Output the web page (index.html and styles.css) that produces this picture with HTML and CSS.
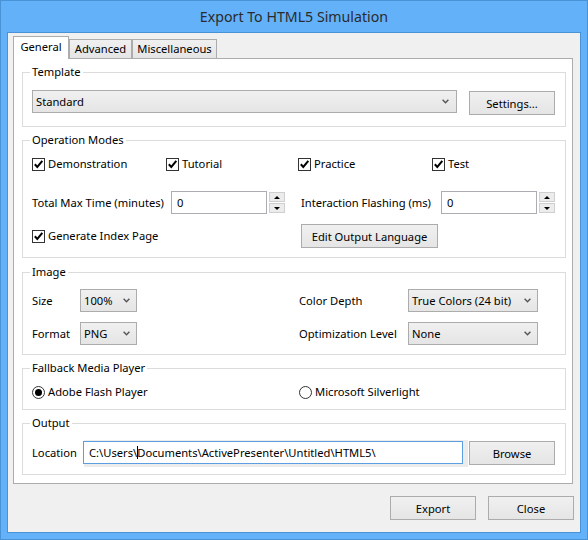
FILE: index.html
```html
<!DOCTYPE html>
<html lang="en">
<head>
  <meta charset="UTF-8">
  <meta name="viewport" content="width=device-width, initial-scale=1.0">
  <title>Export To HTML5 Simulation</title>
  <link rel="stylesheet" href="styles.css">
</head>
<body>
  <div class="window">
    <header class="titlebar">Export To HTML5 Simulation</header>
    <div class="client">
      <ul class="tabs">
        <li class="tab active general">General</li>
        <li class="tab advanced">Advanced</li>
        <li class="tab misc">Miscellaneous</li>
      </ul>

      <div class="panel">
        <!-- Template -->
        <fieldset class="group template">
          <legend>Template</legend>
          <div class="row">
            <div class="combo grow">
              <span>Standard</span>
              <svg class="chev" width="7" height="5" viewBox="0 0 7 5"><path d="M0.6 0.8 L3.5 3.8 L6.4 0.8" fill="none" stroke="#555" stroke-width="1.4"/></svg>
            </div>
            <button class="btn settings">Settings...</button>
          </div>
        </fieldset>

        <!-- Operation Modes -->
        <fieldset class="group modes">
          <legend>Operation Modes</legend>
          <div class="checks">
            <label class="check"><span class="box"><svg width="11" height="11" viewBox="0 0 11 11"><path d="M1.8 5.2 L4.3 7.9 L9.3 1.9" fill="none" stroke="#000" stroke-width="2"/></svg></span>Demonstration</label>
            <label class="check"><span class="box"><svg width="11" height="11" viewBox="0 0 11 11"><path d="M1.8 5.2 L4.3 7.9 L9.3 1.9" fill="none" stroke="#000" stroke-width="2"/></svg></span>Tutorial</label>
            <label class="check"><span class="box"><svg width="11" height="11" viewBox="0 0 11 11"><path d="M1.8 5.2 L4.3 7.9 L9.3 1.9" fill="none" stroke="#000" stroke-width="2"/></svg></span>Practice</label>
            <label class="check"><span class="box"><svg width="11" height="11" viewBox="0 0 11 11"><path d="M1.8 5.2 L4.3 7.9 L9.3 1.9" fill="none" stroke="#000" stroke-width="2"/></svg></span>Test</label>
          </div>
          <div class="fields">
            <div class="field">
              <span>Total Max Time (minutes)</span>
              <div class="spinner">
                <div class="text">0</div>
                <div class="spin"><span class="up"></span><span class="down"></span></div>
              </div>
            </div>
            <div class="field">
              <span>Interaction Flashing (ms)</span>
              <div class="spinner">
                <div class="text">0</div>
                <div class="spin"><span class="up"></span><span class="down"></span></div>
              </div>
            </div>
            <label class="check"><span class="box"><svg width="11" height="11" viewBox="0 0 11 11"><path d="M1.8 5.2 L4.3 7.9 L9.3 1.9" fill="none" stroke="#000" stroke-width="2"/></svg></span>Generate Index Page</label>
            <div><button class="btn lang">Edit Output Language</button></div>
          </div>
        </fieldset>

        <!-- Image -->
        <fieldset class="group image">
          <legend>Image</legend>
          <div class="image-grid">
            <span>Size</span>
            <div><div class="combo size"><span>100%</span><svg class="chev" width="7" height="5" viewBox="0 0 7 5"><path d="M0.6 0.8 L3.5 3.8 L6.4 0.8" fill="none" stroke="#555" stroke-width="1.4"/></svg></div></div>
            <span>Color Depth</span>
            <div><div class="combo depth"><span>True Colors (24 bit)</span><svg class="chev" width="7" height="5" viewBox="0 0 7 5"><path d="M0.6 0.8 L3.5 3.8 L6.4 0.8" fill="none" stroke="#555" stroke-width="1.4"/></svg></div></div>
            <span>Format</span>
            <div><div class="combo size"><span>PNG</span><svg class="chev" width="7" height="5" viewBox="0 0 7 5"><path d="M0.6 0.8 L3.5 3.8 L6.4 0.8" fill="none" stroke="#555" stroke-width="1.4"/></svg></div></div>
            <span>Optimization Level</span>
            <div><div class="combo depth"><span>None</span><svg class="chev" width="7" height="5" viewBox="0 0 7 5"><path d="M0.6 0.8 L3.5 3.8 L6.4 0.8" fill="none" stroke="#555" stroke-width="1.4"/></svg></div></div>
          </div>
        </fieldset>

        <!-- Fallback Media Player -->
        <fieldset class="group fallback">
          <legend>Fallback Media Player</legend>
          <div class="radios">
            <label class="radio"><span class="dot on"></span>Adobe Flash Player</label>
            <label class="radio"><span class="dot"></span>Microsoft Silverlight</label>
          </div>
        </fieldset>

        <!-- Output -->
        <fieldset class="group output">
          <legend>Output</legend>
          <div class="row">
            <span class="loc-label">Location</span>
            <div class="text location">C:\Users\<span class="caret"></span>Documents\ActivePresenter\Untitled\HTML5\</div>
            <button class="btn browse">Browse</button>
          </div>
        </fieldset>
      </div>

      <div class="actions">
        <button class="btn">Export</button>
        <button class="btn">Close</button>
      </div>
    </div>
  </div>
</body>
</html>
```

FILE: styles.css
```css
* {
  margin: 0;
  padding: 0;
  box-sizing: border-box;
}
body {
  font-family: "Noto Sans", "Segoe UI", sans-serif;
  font-size: 11.2px;
  color: #000;
  background: #62b1f9;
  white-space: nowrap;
}
.window {
  width: 588px;
  height: 540px;
  background: #62b1f9;
  border: 1px solid #4a92d6;
  padding: 0 6px 6px;
  display: flex;
  flex-direction: column;
}
.titlebar {
  height: 31px;
  line-height: 31px;
  text-align: center;
  font-size: 14.2px;
  color: #2b2b2b;
}
.client {
  flex: 1;
  background: #f0f0f0;
  border: 1px solid #4a92d6;
  padding: 3px 7px 0 5px;
}

/* tabs */
.tabs {
  list-style: none;
  display: flex;
  align-items: flex-end;
  height: 23px;
  margin-bottom: -1px;
}
.tab {
  height: 19px;
  margin-bottom: 1px;
  line-height: 18px;
  text-align: center;
  background: linear-gradient(#f0f0f0, #e5e5e5);
  border: 1px solid #acacac;
  border-bottom: 0;
}
.tab.active {
  height: 23px;
  margin-bottom: 0;
  line-height: 20px;
  background: #fff;
  z-index: 1;
}
.general { width: 56px; }
.advanced { width: 63px; }
.misc { width: 85px; }

.panel {
  background: #fff;
  border: 1px solid #acacac;
  padding: 5px 6px 8px 8px;
  display: flex;
  flex-direction: column;
  gap: 5px;
}

/* group boxes */
.group {
  border: 1px solid #dcdcdc;
  padding: 10px 10px 10px 9px;
}
.group legend {
  padding: 0 2px;
  margin-left: -2px;
  line-height: 16px;
}
.template { padding-bottom: 11px; }
.modes { padding-top: 8px; padding-bottom: 9px; }
.image { padding-top: 9px; padding-bottom: 9px; margin-top: 1px; }
.fallback { padding-top: 8px; padding-bottom: 9px; }
.output { padding-bottom: 9px; }

.row {
  display: flex;
  align-items: flex-start;
}

/* dropdowns */
.combo {
  height: 23px;
  display: flex;
  align-items: center;
  justify-content: space-between;
  padding: 0 7px 0 3px;
  border: 1px solid #acacac;
  background: linear-gradient(#f0f0f0, #e5e5e5);
}
.combo .chev { flex: none; }
.grow { flex: 1; }
.size { width: 57px; padding-right: 6px; }
.depth { width: 130px; padding-right: 6px; }

/* buttons */
.btn {
  height: 24px;
  font: inherit;
  color: #000;
  border: 1px solid #acacac;
  background: linear-gradient(#f0f0f0, #e5e5e5);
}
.settings { width: 86px; margin-left: 12px; margin-top: 1px; }
.lang { width: 137px; }
.browse { width: 86px; margin-left: 6px; }

/* checkboxes */
.checks {
  display: grid;
  grid-template-columns: 134px 132px 134px 1fr;
  height: 16px;
}
.check {
  display: flex;
  align-items: center;
  line-height: 16px;
}
.box {
  width: 13px;
  height: 13px;
  margin-right: 3px;
  border: 1px solid #333;
  background: #fff;
  display: flex;
}

.fields {
  display: grid;
  grid-template-columns: 253px 1fr;
  column-gap: 16px;
  row-gap: 10px;
  margin-top: 19px;
}
.field {
  display: flex;
  align-items: center;
  justify-content: space-between;
}
.spinner {
  display: flex;
}
.text {
  height: 23px;
  line-height: 21px;
  padding-left: 5px;
  border: 1px solid #abadb3;
  background: #fff;
  overflow: hidden;
}
.spinner .text { width: 96px; }
.spin {
  width: 16px;
  margin-left: 2px;
  padding-top: 1px;
  display: flex;
  flex-direction: column;
  gap: 1px;
}
.spin span {
  height: 10px;
  border: 1px solid #cfcfcf;
  background: #ececec;
  display: flex;
  align-items: center;
  justify-content: center;
}
.spin .up::before {
  content: "";
  border-left: 3px solid transparent;
  border-right: 3px solid transparent;
  border-bottom: 3px solid #000;
}
.spin .down::before {
  content: "";
  border-left: 3px solid transparent;
  border-right: 3px solid transparent;
  border-top: 3px solid #000;
}

/* image */
.image-grid {
  display: grid;
  grid-template-columns: 48px 219px 109px 1fr;
  grid-auto-rows: 23px;
  row-gap: 10px;
  align-items: center;
}

/* radios */
.radios {
  display: grid;
  grid-template-columns: 267px 1fr;
}
.radio {
  display: flex;
  align-items: center;
  line-height: 16px;
}
.dot {
  width: 13px;
  height: 13px;
  margin-right: 3px;
  border: 1px solid #333;
  border-radius: 50%;
  background: #fff;
  display: flex;
  align-items: center;
  justify-content: center;
}
.dot.on::before {
  content: "";
  width: 7px;
  height: 7px;
  border-radius: 50%;
  background: #000;
}

/* output */
.loc-label {
  width: 51px;
  line-height: 23px;
}
.location {
  flex: 1;
  border-color: #5b9fe2;
  box-shadow: 3px 1px 0 2px #ececec;
}
.caret {
  display: inline-block;
  width: 0;
  height: 13px;
  vertical-align: -2px;
  border-left: 1px solid #000;
  margin-right: -1px;
}

.actions {
  display: flex;
  justify-content: flex-end;
  gap: 12px;
  margin-top: 12px;
  margin-right: -1px;
}
.actions .btn { width: 86px; }
```
